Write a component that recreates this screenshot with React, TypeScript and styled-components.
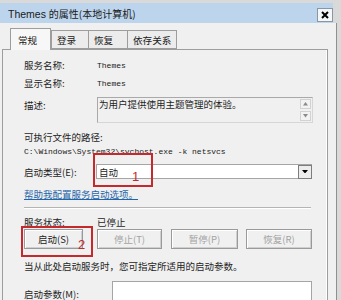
import React from 'react';
import styled, { createGlobalStyle } from 'styled-components';

const cjk = `"Noto Sans CJK SC", "Liberation Sans", sans-serif`;
const mono = `"Liberation Mono", "DejaVu Sans Mono", monospace`;

const GlobalStyle = createGlobalStyle`
  html, body {
    margin: 0;
    padding: 0;
    background: #d9d9d9;
  }
  body {
    font-family: ${cjk};
  }
`;

const Frame = styled.div`
  width: 341px;
  height: 300px;
  overflow: hidden;
  box-sizing: border-box;
  padding-top: 3px;
  background: #d9d9d9;
  display: flex;
  flex-direction: column;
`;

const TitleBar = styled.div`
  width: 333px;
  height: 20px;
  flex: none;
  box-sizing: border-box;
  padding-left: 8px;
  background: #bdd4ed;
  display: flex;
  justify-content: space-between;
  align-items: center;
  color: #1a1a1a;
  font-size: 10px;
  & .latin {
    font-family: "Liberation Sans", sans-serif;
    font-size: 10.5px;
  }
`;

const CloseButton = styled.div`
  width: 16px;
  height: 14px;
  box-sizing: border-box;
  align-self: flex-end;
  margin-bottom: 1px;
  background: #f4f6f8;
  border: 1px solid #8a96a4;
  display: flex;
  align-items: center;
  justify-content: center;
`;

const Client = styled.div`
  width: 337px;
  flex: 1;
  box-sizing: border-box;
  background: #f0f0f0;
  border-right: 1px solid #8f8f8f;
  padding-left: 2px;
  display: flex;
  flex-direction: column;
`;

const TabStrip = styled.div`
  height: 26px;
  flex: none;
  display: flex;
  align-items: flex-end;
  padding-left: 8px;
  position: relative;
  z-index: 1;
`;

const Tab = styled.div<{ $w: number; $active?: boolean }>`
  width: ${(p) => p.$w}px;
  height: ${(p) => (p.$active ? 22 : 19)}px;
  box-sizing: border-box;
  margin-bottom: ${(p) => (p.$active ? -1 : 0)}px;
  padding-left: ${(p) => (p.$active ? 7 : 5)}px;
  display: flex;
  align-items: center;
  font-size: 9.6px;
  color: #1a1a1a;
  background: ${(p) => (p.$active ? '#f7f7f7' : '#ececec')};
  border: 1px solid #9d9d9d;
  border-bottom: ${(p) => (p.$active ? 'none' : '1px solid #9d9d9d')};
  border-right: ${(p) => (p.$active ? '1px solid #9d9d9d' : 'none')};
  &:last-child {
    border-right: 1px solid #9d9d9d;
  }
`;

const Panel = styled.div`
  width: 326px;
  flex: 1;
  box-sizing: border-box;
  border: 1px solid #9d9d9d;
  border-bottom: none;
  box-shadow: inset -1px 0 #ffffff;
  background: #f0f0f0;
  padding: 6px 15px 0 21px;
  display: flex;
  flex-direction: column;
  font-size: 9.5px;
  color: #1e1e1e;
`;

const InfoRow = styled.div`
  display: grid;
  grid-template-columns: 73px 1fr;
  align-items: center;
  height: 18px;
`;

const MonoValue = styled.span`
  font-family: ${mono};
  font-size: 8px;
  color: #1a1a1a;
`;

const DescRow = styled.div`
  display: grid;
  grid-template-columns: 73px 216px;
  margin-top: 5px;
  align-items: start;
`;

const TopLabel = styled.span<{ $pt?: number }>`
  line-height: 14px;
  padding-top: ${(p) => p.$pt ?? 1}px;
`;

const DescBox = styled.div`
  height: 26px;
  box-sizing: border-box;
  border: 1px solid #a9a9a9;
  border-right-color: #d6d6d6;
  border-bottom-color: #d6d6d6;
  background: #f0f0f0;
  display: flex;
  justify-content: space-between;
  padding-left: 1px;
  line-height: 12px;
`;

const ScrollCol = styled.div`
  width: 12px;
  display: flex;
  flex-direction: column;
  justify-content: space-between;
  padding: 1px 0;
`;

const ScrollBtn = styled.div`
  width: 11px;
  height: 10px;
  box-sizing: border-box;
  border: 1px solid #d2d2d2;
  background: #f2f2f2;
  display: flex;
  align-items: center;
  justify-content: center;
`;

const TextLine = styled.div<{ $mt?: number }>`
  line-height: 13px;
  margin-top: ${(p) => p.$mt ?? 0}px;
  white-space: nowrap;
`;

const SelectRow = styled.div`
  display: grid;
  grid-template-columns: 72px 216px;
  align-items: center;
  margin-top: 6px;
  height: 15px;
  position: relative;
`;

const Select = styled.div`
  height: 15px;
  box-sizing: border-box;
  border: 1px solid #a5a5a5;
  background: #ffffff;
  display: flex;
  justify-content: space-between;
  align-items: center;
  padding-left: 2px;
`;

const DropButton = styled.div`
  width: 14px;
  height: 14px;
  box-sizing: border-box;
  margin-right: -1px;
  border: 1px solid #7d7d7d;
  background: #ececec;
  display: flex;
  align-items: center;
  justify-content: center;
`;

const HelpLink = styled.a`
  display: block;
  margin-top: 8px;
  line-height: 14px;
  color: #1f65a9;
  text-decoration: underline;
`;

const Separator = styled.div`
  margin-top: 6px;
  width: 287px;
  height: 1px;
  background: #b4b4b4;
  border-bottom: 1px solid #ffffff;
`;

const StatusRow = styled.div`
  display: grid;
  grid-template-columns: 73px 1fr;
  align-items: center;
  height: 14px;
  margin-top: 6px;
`;

const ButtonRow = styled.div`
  display: flex;
  height: 20px;
  position: relative;
`;

const ActionButton = styled.div<{ $w: number; $ml?: number; $disabled?: boolean }>`
  width: ${(p) => p.$w}px;
  height: 20px;
  margin-left: ${(p) => p.$ml ?? 0}px;
  box-sizing: border-box;
  border: 1px solid #9a9a9a;
  box-shadow: inset 1px 1px #ffffff, inset -1px -1px #cfcfcf;
  background: #f0f0f0;
  display: flex;
  align-items: center;
  justify-content: center;
  color: ${(p) => (p.$disabled ? '#a3a3a3' : '#1a1a1a')};
  font-size: 9.5px;
`;

const ParamRow = styled.div`
  display: grid;
  grid-template-columns: 88px 200px;
  margin-top: 8px;
  align-items: start;
`;

const ParamInput = styled.div`
  height: 26px;
  box-sizing: border-box;
  border: 1px solid #a5a5a5;
  background: #ffffff;
`;

const Callout = styled.div<{ $left: number; $top: number; $w: number; $h: number }>`
  position: absolute;
  left: ${(p) => p.$left}px;
  top: ${(p) => p.$top}px;
  width: ${(p) => p.$w}px;
  height: ${(p) => p.$h}px;
  box-sizing: border-box;
  border: 2px solid #c42a2d;
  pointer-events: none;
`;

const CalloutNumber = styled.span<{ $left: number; $top: number }>`
  position: absolute;
  left: ${(p) => p.$left}px;
  top: ${(p) => p.$top}px;
  font-family: "Liberation Sans", sans-serif;
  font-size: 13px;
  line-height: 13px;
  color: #c42a2d;
`;

function Arrow({ dir, color = '#8a8a8a', w = 5 }: { dir: 'up' | 'down'; color?: string; w?: number }) {
  const h = Math.ceil(w / 2) + 0.5;
  return (
    <svg width={w} height={h} viewBox={`0 0 ${w} ${h}`}>
      {dir === 'down' ? (
        <polygon points={`0,0 ${w},0 ${w / 2},${h}`} fill={color} />
      ) : (
        <polygon points={`0,${h} ${w},${h} ${w / 2},0`} fill={color} />
      )}
    </svg>
  );
}

function App() {
  return (
    <>
      <GlobalStyle />
      <Frame>
        <TitleBar>
          <span>
            <span className="latin">Themes </span>
            的属性(本地计算机)
          </span>
          <CloseButton>
            <svg width="8" height="8" viewBox="0 0 8 8">
              <path d="M1 1 L7 7 M7 1 L1 7" stroke="#000" strokeWidth="2" />
            </svg>
          </CloseButton>
        </TitleBar>
        <Client>
          <TabStrip>
            <Tab $w={41} $active>常规</Tab>
            <Tab $w={37}>登录</Tab>
            <Tab $w={39}>恢复</Tab>
            <Tab $w={50}>依存关系</Tab>
          </TabStrip>
          <Panel>
            <InfoRow>
              <span>服务名称:</span>
              <MonoValue>Themes</MonoValue>
            </InfoRow>
            <InfoRow>
              <span>显示名称:</span>
              <MonoValue>Themes</MonoValue>
            </InfoRow>
            <DescRow>
              <TopLabel>描述:</TopLabel>
              <DescBox>
                <span>为用户提供使用主题管理的体验。</span>
                <ScrollCol>
                  <ScrollBtn>
                    <Arrow dir="up" />
                  </ScrollBtn>
                  <ScrollBtn>
                    <Arrow dir="down" />
                  </ScrollBtn>
                </ScrollCol>
              </DescBox>
            </DescRow>
            <TextLine $mt={8}>可执行文件的路径:</TextLine>
            <TextLine>
              <MonoValue>C:\Windows\System32\svchost.exe -k netsvcs</MonoValue>
            </TextLine>
            <SelectRow>
              <span>启动类型(E):</span>
              <Select>
                <span>自动</span>
                <DropButton>
                  <Arrow dir="down" color="#000" w={6} />
                </DropButton>
              </Select>
              <Callout $left={69} $top={-11} $w={60} $h={34}>
                <CalloutNumber $left={37} $top={15}>1</CalloutNumber>
              </Callout>
            </SelectRow>
            <HelpLink>帮助我配置服务启动选项。</HelpLink>
            <Separator />
            <StatusRow>
              <span>服务状态:</span>
              <span>已停止</span>
            </StatusRow>
            <ButtonRow>
              <ActionButton $w={59}>启动(S)</ActionButton>
              <ActionButton $w={65} $ml={14} $disabled>停止(T)</ActionButton>
              <ActionButton $w={67} $ml={9} $disabled>暂停(P)</ActionButton>
              <ActionButton $w={66} $ml={8} $disabled>恢复(R)</ActionButton>
              <Callout $left={-3} $top={-3} $w={72} $h={31}>
                <CalloutNumber $left={55} $top={10}>2</CalloutNumber>
              </Callout>
            </ButtonRow>
            <TextLine $mt={11}>当从此处启动服务时，您可指定所适用的启动参数。</TextLine>
            <ParamRow>
              <TopLabel $pt={6}>启动参数(M):</TopLabel>
              <ParamInput />
            </ParamRow>
          </Panel>
        </Client>
      </Frame>
    </>
  );
}

export default App;
